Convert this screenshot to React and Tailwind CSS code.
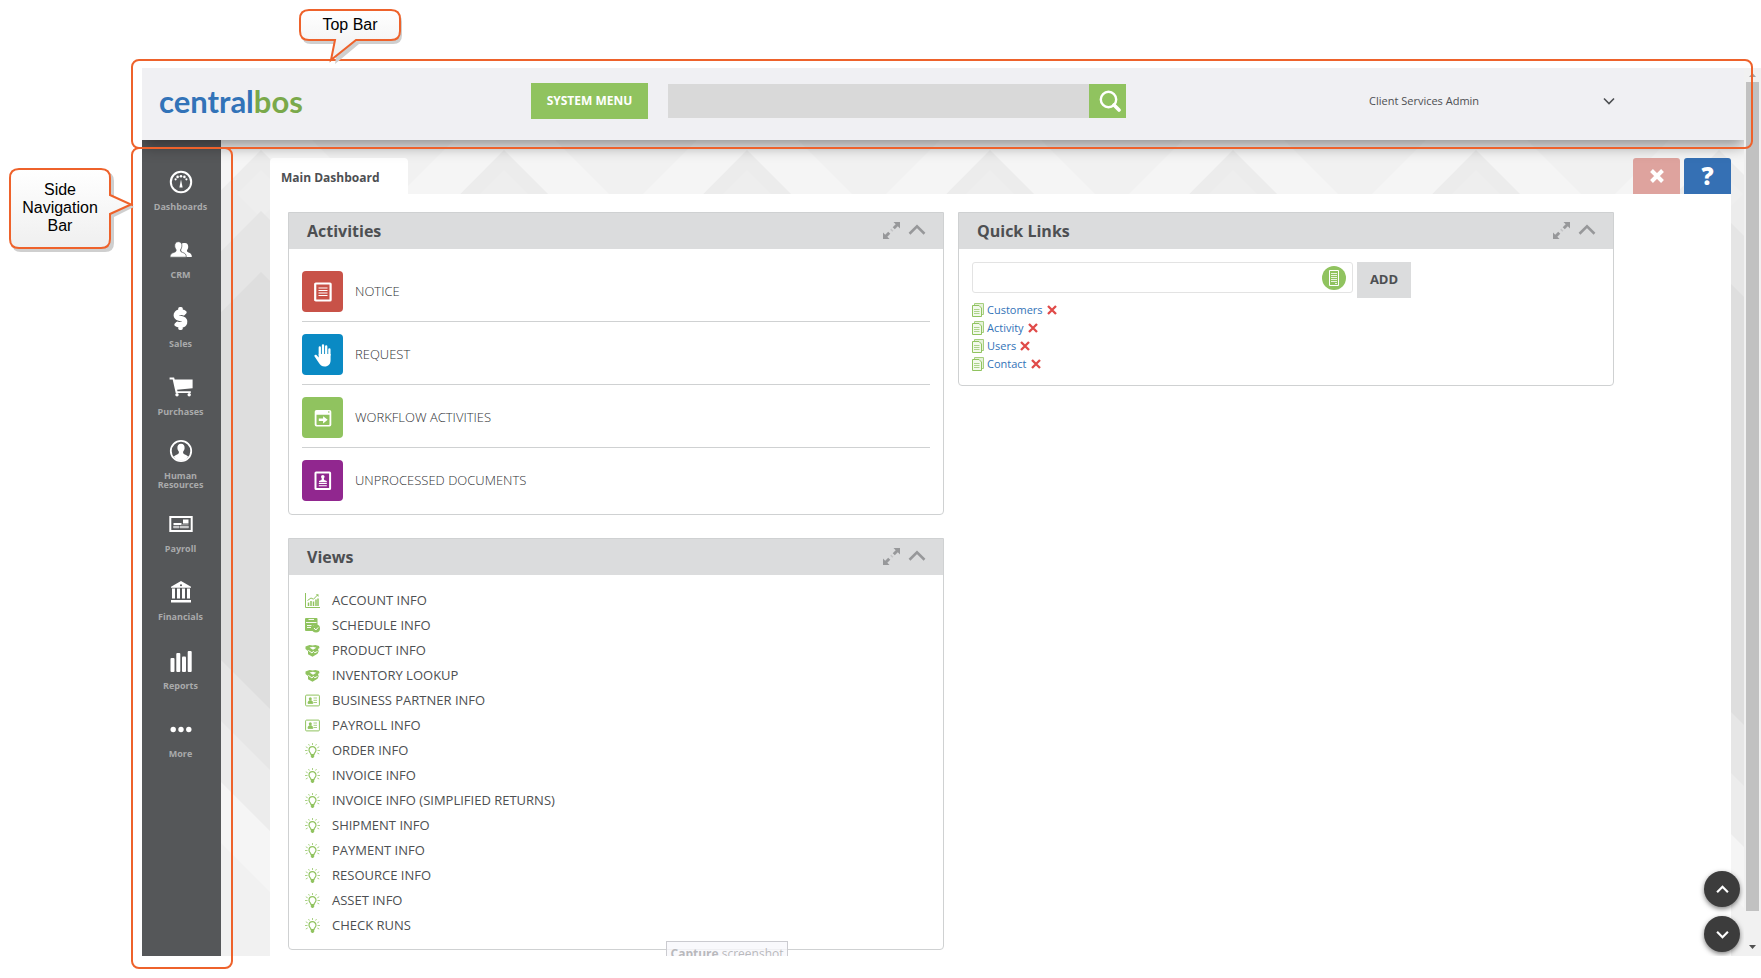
import { useState } from 'react'
import { FaHandPaper, FaDollarSign } from 'react-icons/fa'

const GREEN = '#90c35f'

const navItems = [
  { label: 'Dashboards', icon: GaugeIcon },
  { label: 'CRM', icon: PeopleIcon },
  { label: 'Sales', icon: DollarIcon },
  { label: 'Purchases', icon: CartIcon },
  { label: 'Human Resources', icon: PersonIcon },
  { label: 'Payroll', icon: CheckIcon },
  { label: 'Financials', icon: BankIcon },
  { label: 'Reports', icon: BarsIcon },
  { label: 'More', icon: DotsIcon },
]

const activities = [
  { label: 'NOTICE', icon: NoticeIcon, bg: 'bg-[#c85248]' },
  { label: 'REQUEST', icon: HandIcon, bg: 'bg-[#0a8ac4]' },
  { label: 'WORKFLOW ACTIVITIES', icon: WorkflowIcon, bg: 'bg-[#90c35f]' },
  { label: 'UNPROCESSED DOCUMENTS', icon: DocumentIcon, bg: 'bg-[#91278f]' },
]

const views = [
  { label: 'ACCOUNT INFO', icon: ChartIcon },
  { label: 'SCHEDULE INFO', icon: ScheduleIcon },
  { label: 'PRODUCT INFO', icon: BoxIcon },
  { label: 'INVENTORY LOOKUP', icon: BoxIcon },
  { label: 'BUSINESS PARTNER INFO', icon: IdCardIcon },
  { label: 'PAYROLL INFO', icon: IdCardIcon },
  { label: 'ORDER INFO', icon: BulbIcon },
  { label: 'INVOICE INFO', icon: BulbIcon },
  { label: 'INVOICE INFO (SIMPLIFIED RETURNS)', icon: BulbIcon },
  { label: 'SHIPMENT INFO', icon: BulbIcon },
  { label: 'PAYMENT INFO', icon: BulbIcon },
  { label: 'RESOURCE INFO', icon: BulbIcon },
  { label: 'ASSET INFO', icon: BulbIcon },
  { label: 'CHECK RUNS', icon: BulbIcon },
]

/* side navigation icons */

function GaugeIcon() {
  return (
    <svg width="24" height="24" viewBox="0 0 24 24" fill="none">
      <circle cx="12" cy="12" r="10.2" stroke="#fff" strokeWidth="2" />
      <path d="M12 9.5 13.6 17.5h-3.2z" fill="#fff" />
      <circle cx="12" cy="6.3" r="1.3" fill="#fff" />
      <circle cx="8.6" cy="6.9" r="1.3" fill="#fff" />
      <circle cx="15.4" cy="6.9" r="1.3" fill="#fff" />
      <circle cx="6.6" cy="9.3" r="1.1" fill="#fff" />
      <circle cx="17.4" cy="9.3" r="1.1" fill="#fff" />
    </svg>
  )
}

function PeopleIcon() {
  return (
    <svg width="24" height="24" viewBox="0 0 24 24">
      <path
        fill="#fff"
        d="M16 5c2.300 0 3.300 1.600 3.200 3.900 0 1.300-.6 2.300-1.100 3-.4 1.500 0 2.100 1.400 2.600 2.300.8 3.300 1.800 3.300 4.500h-6.600l-4-6V6c.8-.7 2-1 3.800-1z"
      />
      <path
        fill="#fff"
        stroke="#555759"
        strokeWidth=".7"
        d="M9.300 3.700c2.700 0 3.700 1.800 3.600 4.400 0 1.500-.7 2.600-1.300 3.400-.4 1.600.1 2.200 1.700 2.800 2.600.9 4 1.700 4 4.900H1c0-3.200 1.700-4 4.300-4.900 1.600-.6 2.100-1.200 1.700-2.800-.6-.8-1.300-1.900-1.300-3.400C5.600 5.500 6.700 3.700 9.300 3.700z"
      />
    </svg>
  )
}

function DollarIcon() {
  return <FaDollarSign className="text-[21px] text-white" stroke="#fff" strokeWidth="50" overflow="visible" />
}

function CartIcon() {
  return (
    <svg width="24" height="24" viewBox="0 0 24 24" fill="#fff">
      <path d="M.6 2.600h4.500l.6 1.900H23.600v8.700L8.100 14.700l.4 1.500h13.300v1.900H6.700L3.700 4.600H.6z" />
      <circle cx="8" cy="19.800" r="1.700" />
      <circle cx="20.200" cy="19.800" r="1.700" />
    </svg>
  )
}

function PersonIcon() {
  return (
    <svg width="24" height="24" viewBox="0 0 24 24">
      <circle cx="12" cy="12" r="10.200" fill="none" stroke="#fff" strokeWidth="1.800" />
      <path
        fill="#fff"
        d="M12 4.800c2.600 0 3.700 1.700 3.600 4.100 0 1.500-.7 2.700-1.400 3.600-.4 1.700.1 2.300 1.700 2.900 1.500.5 2.600 1.200 3.200 2.300-1.700 2.600-4.200 4-7.100 4s-5.400-1.400-7.100-4c.6-1.100 1.700-1.800 3.200-2.300 1.600-.6 2.100-1.200 1.700-2.900-.7-.9-1.400-2.100-1.400-3.600C8.300 6.500 9.400 4.800 12 4.800z"
      />
    </svg>
  )
}

function CheckIcon() {
  return (
    <svg width="24" height="24" viewBox="0 0 24 24">
      <rect x="1.300" y="5" width="21.400" height="14" fill="none" stroke="#fff" strokeWidth="2" />
      <path d="M14 7.500h5.500v4H14zM4.500 11h8v2h-8z" fill="#fff" />
      <path d="M4.500 14h5.500v2H4.500zM11 14h8.500v2H11zM13 12.500h6.500" fill="#c8c9ca" stroke="#c8c9ca" strokeWidth=".5" />
    </svg>
  )
}

function BankIcon() {
  return (
    <svg width="24" height="24" viewBox="0 0 24 24" fill="#fff">
      <path fillRule="evenodd" d="M12 1 22 6.800v1H2v-1zm0 3.200a1 1 0 1 0 0 2 1 1 0 0 0 0-2z" />
      <path d="M3 8.500h3v10H3zM8 8.500h3v10H8zM13 8.500h3v10h-3zM18 8.500h3v10h-3zM2 20h20v2.400H2z" />
    </svg>
  )
}

function BarsIcon() {
  return (
    <svg width="24" height="24" viewBox="0 0 24 24" fill="#fff">
      <rect x="1.500" y="9" width="4" height="14" rx="1" />
      <rect x="7.300" y="4" width="4" height="19" rx="1" />
      <rect x="13" y="7.500" width="4" height="15.500" rx="1" />
      <rect x="18.700" y="2" width="4" height="21" rx="1" />
    </svg>
  )
}

function DotsIcon() {
  return (
    <svg width="24" height="24" viewBox="0 0 24 24" fill="#fff">
      <circle cx="4.200" cy="12.500" r="2.700" />
      <circle cx="12" cy="12.500" r="2.700" />
      <circle cx="19.800" cy="12.500" r="2.700" />
    </svg>
  )
}

/* activity icons */

function NoticeIcon() {
  return (
    <svg width="20" height="22" viewBox="0 0 20 22" fill="none" stroke="#fff">
      <rect x="2.200" y="2.500" width="15.400" height="17" rx=".6" strokeWidth="2.200" />
      <path d="M5.500 7h9M5.500 9.500h9M5.500 12h9M5.500 14.500h9" strokeWidth="1.200" />
    </svg>
  )
}

function HandIcon() {
  return (
    <svg width="20" height="24" viewBox="0 0 20 24" fill="none" stroke="#fff" strokeLinecap="round">
      <path d="M6.800 12V4.500M10 11V2.500M13.200 11V3.500M16.400 12V6.500" strokeWidth="2.300" />
      <path
        d="M5.700 11h11.900v6c0 4.200-2.300 6.500-5.900 6.500-3 0-4.500-1.300-5.900-3.700L1.600 13.600c-.8-1.500.9-2.600 2.100-1.400l2 2.300z"
        fill="#fff"
        stroke="none"
      />
    </svg>
  )
}

function WorkflowIcon() {
  return (
    <svg width="20" height="20" viewBox="0 0 20 20">
      <path fill="#fff" fillRule="evenodd" d="M3.500 2h13A1.800 1.800 0 0 1 18.300 3.800v13a1.800 1.800 0 0 1-1.800 1.800h-13a1.800 1.800 0 0 1-1.800-1.800v-13A1.800 1.800 0 0 1 3.500 2zm0 4.800v9.400q0 .7.700.7h11.600q.7 0 .7-.7V6.800z" />
      <path fill="#fff" d="M5.800 10.600h4.300V8.200l4.600 3.600-4.600 3.600V13H5.800z" />
      <circle cx="15.800" cy="4" r=".8" fill={GREEN} />
    </svg>
  )
}

function DocumentIcon() {
  return (
    <svg width="20" height="22" viewBox="0 0 20 22" fill="none">
      <rect x="2.500" y="2.500" width="14.600" height="16.500" rx=".6" stroke="#fff" strokeWidth="2" />
      <circle cx="9.800" cy="6.800" r="1.800" fill="#fff" />
      <path d="M8.800 8h2l.4 2 2.600 1v1.200H6V11l2.500-1z" fill="#fff" />
      <path d="M5.800 13.500h8M5.800 15.800h8" stroke="#fff" strokeWidth="1.100" />
    </svg>
  )
}

/* view list icons */

function ChartIcon() {
  return (
    <svg width="15" height="15" viewBox="0 0 15 15" fill="none" stroke={GREEN}>
      <path d="M.5 0v14.500H15" />
      <path d="M3.500 13V9.500M6 13V8M8.500 13V8.500M11 13V6.500M13 13V5.500" strokeWidth="1.500" />
      <path d="M2.500 7.500 6 5l2.500 1.200L12.500 2" />
      <path d="M10.800 1.200h2.700v2.700z" fill={GREEN} stroke="none" />
    </svg>
  )
}

function ScheduleIcon() {
  return (
    <svg width="15" height="15" viewBox="0 0 15 15">
      <path d="M0 1q0-1 1-1h10.500q1 0 1 1v6H8v6H1q-1 0-1-1z" fill={GREEN} />
      <path d="M3.500 1.500h5.500M1 4.500h10.500M2 7.500h4.500M2 9.500h4" stroke="#fff" strokeWidth=".9" />
      <circle cx="11" cy="10.500" r="4" fill={GREEN} />
      <path d="M9 10l1.800 2 2.400-2.600" fill="none" stroke="#fff" />
    </svg>
  )
}

function BoxIcon() {
  return (
    <svg width="15" height="13" viewBox="0 0 15 13">
      <path d="M.5 2.500 4.500 1l3 .6 3-.6 3.500 1 .5 2-1.500 1 .7 2.300-1.200 2.500-5 3-4.500-2.600V7L.5 5z" fill={GREEN} />
      <path d="M4.500 3.400 8 2.800l3.300 1L8 5.800z" fill="#fff" />
      <path d="M3.300 6.300 7 9l1.300-1.700 1.500 1.400 2.700-1.200" fill="none" stroke="#fff" strokeWidth="1" />
    </svg>
  )
}

function IdCardIcon() {
  return (
    <svg width="15" height="13" viewBox="0 0 15 13">
      <rect x=".6" y="1.100" width="13.800" height="10.800" rx="1" fill="none" stroke={GREEN} />
      <circle cx="5.300" cy="4.700" r="1.500" fill={GREEN} />
      <path d="M3 9.500c0-2.200.8-3 2.300-3s2.500.8 2.500 3zM8.500 4h3.500M8.500 6.300h3.500M8.500 8.500h3.500" fill={GREEN} stroke={GREEN} strokeWidth=".8" />
    </svg>
  )
}

function BulbIcon() {
  return (
    <svg width="15" height="15" viewBox="0 0 15 15" fill="none" stroke={GREEN}>
      <path d="M6 11.500c0-1.800-2-2.200-2-4.300a3.500 3.500 0 0 1 7 0c0 2.100-2 2.500-2 4.300z" strokeWidth="1.200" />
      <path d="M5.800 11.500h3.400v2L8.200 15H6.800l-1-1.500z" fill={GREEN} stroke="none" />
      <path d="M7.500 0v2M0 7.500h2.500M12.500 7.500H15M3.500 1l.9 1.600M11.500 1l-.9 1.600M.8 3.800l1.900 1M14.200 3.800l-1.900 1M.8 11l1.900-1M14.200 11l-1.900-1" opacity=".75" />
    </svg>
  )
}

/* small shared icons */

function Chevron({ up, size = 12, width = 2, color = 'currentColor' }) {
  return (
    <svg width={size} height={size} viewBox="0 0 12 12" fill="none" stroke={color} strokeWidth={width}>
      <path d={up ? 'M1 8.500l5-5 5 5' : 'M1 3.500l5 5 5-5'} />
    </svg>
  )
}

function ExpandIcon() {
  return (
    <svg width="17" height="17" viewBox="0 0 17 17" fill="#97989a">
      <path d="M10.500 0H17v6.500l-2.200-2.200-3 3-2.100-2.100 3-3zM0 17v-6.500l2.200 2.200 3-3 2.100 2.100-3 3L6.500 17z" />
      <path d="M8.300 6.600l2.100 2.100-1.100 1.100-2.100-2.100z" opacity=".35" />
    </svg>
  )
}

function PagesIcon() {
  return (
    <svg width="12" height="14" viewBox="0 0 12 14" fill="none" stroke={GREEN}>
      <path d="M2.500 2.500V.5h9v11h-1.500" fill="#dff0cf" opacity=".8" />
      <path d="M.5 2.500h6.500l2.500 2.500v8.500h-9z" fill="#f2f9ec" />
      <path d="M2 6.500h5.500M2 8.500h5.500M2 10.500h5.500" opacity=".7" />
    </svg>
  )
}

function DeleteIcon() {
  return (
    <svg width="10" height="10" viewBox="0 0 10 10" stroke="#e04a48" strokeWidth="2.300">
      <path d="M1 1l8 8M9 1L1 9" />
    </svg>
  )
}

function Backdrop() {
  return (
    <svg className="absolute inset-0 h-full w-full" aria-hidden="true">
      <defs>
        <pattern id="facets" x="-81" y="0" width="243" height="1400" patternUnits="userSpaceOnUse">
          <rect width="243" height="1400" fill="#f5f5f5" />
          <path d="M0 0h71L0 71zM243 0h-71l71 71z" fill="#f1f1f1" />
          <path d="M121 10l122 122v1268H0V132z" fill="#ececec" />
          <path d="M121 30l24 24-24 24-24-24z" fill="#eeeeee" />
          <path d="M121 71l122 122v1207H0V193z" fill="#e5e5e5" />
          <path d="M121 132l122 122v1146H0V254z" fill="#dedede" />
          <path d="M0 439l243 243v718H0z" fill="#e6e6e6" />
          <path d="M0 500l243 243v657H0z" fill="#ececec" />
          <path d="M0 561l243 243v596H0z" fill="#f5f5f5" />
          <path d="M0 622l243 243v535H0z" fill="#f1f1f1" />
        </pattern>
      </defs>
      <rect width="100%" height="100%" fill="url(#facets)" />
    </svg>
  )
}

function Card({ title, children }) {
  const [open, setOpen] = useState(true)

  return (
    <section className="rounded-b-[4px] border border-[#cfd1d2] bg-white">
      <header className="flex h-9 items-center bg-[#dbdcdd] pr-[17px] pl-[18px]">
        <h2 className="flex-1 text-base font-bold">{title}</h2>
        <div className="flex items-center gap-2 pb-[2px]">
          <button type="button" aria-label={'Expand ' + title}>
            <ExpandIcon />
          </button>
          <button type="button" aria-label={'Collapse ' + title} onClick={() => setOpen(!open)}>
            <Chevron up={open} size={18} width={1.7} color="#97989a" />
          </button>
        </div>
      </header>
      {open && children}
    </section>
  )
}

function TopBar() {
  return (
    <header className="relative z-10 flex h-[72px] shrink-0 items-center bg-[#f0f0f3] pb-[6px] pl-[17px] shadow-[0_6px_14px_rgba(0,0,0,0.4)]">
      <a href="#home" className="w-[372px] font-[Lato,sans-serif] text-[31px] leading-9 font-bold text-[#3273b8]">
        central<span className="text-[#7aa94a]">bos</span>
      </a>
      <button type="button" className="h-9 w-[117px] bg-[#90c35f] text-xs font-bold text-white">
        SYSTEM MENU
      </button>
      <form className="ml-5 flex h-[34px] w-[458px]" onSubmit={(e) => e.preventDefault()}>
        <input type="text" aria-label="Search" className="min-w-0 flex-1 bg-[#d9d9d9] px-3 text-sm outline-none" />
        <button type="submit" aria-label="Search" className="flex w-[37px] items-center justify-center bg-[#90c35f] pl-1">
          <svg width="22" height="22" viewBox="0 0 22 22" fill="none" stroke="#fff">
            <circle cx="9.500" cy="9.500" r="7.700" strokeWidth="2.400" />
            <path d="M15 15l5 5" strokeWidth="3.600" strokeLinecap="round" />
          </svg>
        </button>
      </form>
      <button type="button" className="mr-[129px] ml-auto flex w-[246px] items-center justify-between text-[11px]">
        Client Services Admin
        <Chevron size={12} width={1.6} />
      </button>
    </header>
  )
}

function SideNav() {
  return (
    <nav className="w-[79px] shrink-0 bg-[#555759] pt-4">
      <ul className="grid h-[616px] auto-rows-fr">
        {navItems.map(({ label, icon: Icon }) => (
          <li key={label} className="flex">
            <a href="#nav" className="flex flex-1 flex-col items-center justify-center pr-[13px] pl-[11px] text-center text-[9px] leading-[9px] font-bold text-[#a9aaab]">
              <span className="mb-2 flex h-6 items-center">
                <Icon />
              </span>
              {label}
            </a>
          </li>
        ))}
      </ul>
    </nav>
  )
}

function Activities() {
  return (
    <Card title="Activities">
      <ul className="px-[13px] pt-[10px] pb-1">
        {activities.map(({ label, icon: Icon, bg }) => (
          <li key={label} className="border-b border-[#cfd1d2] pt-3 pb-[9px] last:border-b-0">
            <a href="#activity" className="flex items-center gap-3 text-[13px] font-light text-[#303235]">
              <span className={'flex size-[41px] items-center justify-center rounded-[4px] ' + bg}>
                <Icon />
              </span>
              {label}
            </a>
          </li>
        ))}
      </ul>
    </Card>
  )
}

function Views() {
  return (
    <Card title="Views">
      <ul className="px-4 pt-[13px] pb-[11px]">
        {views.map(({ label, icon: Icon }) => (
          <li key={label}>
            <a href="#view" className="flex h-[25px] items-center gap-3 text-[13px]">
              <Icon />
              {label}
            </a>
          </li>
        ))}
      </ul>
    </Card>
  )
}

function QuickLinks() {
  const [links, setLinks] = useState(['Customers', 'Activity', 'Users', 'Contact'])
  const [value, setValue] = useState('')

  const add = (e) => {
    e.preventDefault()
    if (!value.trim()) return
    setLinks([...links, value.trim()])
    setValue('')
  }

  return (
    <Card title="Quick Links">
      <div className="px-[13px] pt-[13px] pb-3">
        <form className="flex items-start gap-1" onSubmit={add}>
          <div className="flex h-[31px] w-[381px] items-center rounded-[3px] border border-[#e3e3e3] pr-[6px]">
            <input
              type="text"
              aria-label="Quick link"
              value={value}
              onChange={(e) => setValue(e.target.value)}
              className="min-w-0 flex-1 px-2 text-xs outline-none"
            />
            <button type="button" aria-label="Browse links" className="flex size-6 items-center justify-center rounded-full bg-[#90c35f]">
              <svg width="12" height="16" viewBox="0 0 12 16" fill="none" stroke="#fff">
                <path d="M1.500 .5h9v15h-9z" />
                <path d="M3 3.500h6M3 5.500h6M3 7.500h6M3 9.500h6M3 11.500h6M7 13.500h2" opacity=".8" />
              </svg>
            </button>
          </div>
          <button type="submit" className="h-9 w-[54px] bg-[#dbdcdd] text-[13px] font-bold">
            ADD
          </button>
        </form>
        <ul className="mt-[3px]">
          {links.map((link) => (
            <li key={link} className="flex h-[18px] items-center text-[11px] text-[#3273b8]">
              <PagesIcon />
              <a href="#link" className="mr-1 ml-[3px]">{link}</a>
              <button type="button" aria-label={'Remove ' + link} onClick={() => setLinks(links.filter((l) => l !== link))}>
                <DeleteIcon />
              </button>
            </li>
          ))}
        </ul>
      </div>
    </Card>
  )
}

function ScrollTrack() {
  return (
    <div className="flex w-[17px] shrink-0 flex-col items-center bg-[#f1f1f1] pt-[5px]" aria-hidden="true">
      <svg width="7" height="4" viewBox="0 0 7 4" fill="#a3a3a3">
        <path d="M3.500 0 7 4H0z" />
      </svg>
      <div className="mt-[5px] mb-[34px] w-[13px] flex-1 bg-[#c1c1c1]" />
      <svg width="7" height="4" viewBox="0 0 7 4" fill="#505050" className="mb-[7px]">
        <path d="M0 0h7L3.500 4z" />
      </svg>
    </div>
  )
}

function Callouts() {
  return (
    <div className="pointer-events-none absolute inset-0 z-30 font-['Liberation_Sans',sans-serif] text-base text-black">
      <div className="absolute top-[59px] right-2 left-[131px] h-[90px] rounded-[8px] border-2 border-[#ee622b]" />
      <div className="absolute top-[147px] bottom-[9px] left-[131px] w-[102px] rounded-[8px] border-2 border-[#ee622b]" />

      <div className="absolute top-2 left-[298px] h-[60px] w-[110px]">
        <svg width="110" height="60" viewBox="0 0 110 60" className="absolute inset-0">
          <defs>
            <linearGradient id="bubble" x1="0" y1="0" x2="0" y2="1">
              <stop offset="0" stopColor="#fff" />
              <stop offset="1" stopColor="#efefef" />
            </linearGradient>
          </defs>
          <path d="M13 5h82q9 0 9 9v13q0 9-9 9H61L37 56l3-20H13q-9 0-9-9V14q0-9 9-9z" fill="#cfcfcf" />
          <path d="M11 2h82q9 0 9 9v12q0 9-9 9H58L33 52l4-20H11q-9 0-9-9V11q0-9 9-9z" fill="url(#bubble)" stroke="#ee622b" strokeWidth="2" />
        </svg>
        <p className="relative w-[104px] pt-[5px] text-center">Top Bar</p>
      </div>

      <div className="absolute top-[167px] left-2 h-[90px] w-[130px]">
        <svg width="130" height="90" viewBox="0 0 130 90" className="absolute inset-0">
          <path d="M13 5h84q9 0 9 9v15l20 11-20 10v26q0 9-9 9H13q-9 0-9-9V14q0-9 9-9z" fill="#cfcfcf" />
          <path d="M11 2h82q9 0 9 9v17l21 9.500L102 47v25q0 9-9 9H11q-9 0-9-9V11q0-9 9-9z" fill="url(#bubble)" stroke="#ee622b" strokeWidth="2" />
        </svg>
        <p className="relative w-[104px] pt-[14px] text-center leading-[18px]">
          Side
          <br />
          Navigation
          <br />
          Bar
        </p>
      </div>
    </div>
  )
}

export default function App() {
  return (
    <div className="relative flex h-screen bg-white pt-[68px] pb-[22px] pl-[142px] font-['Open_Sans','Noto_Sans',sans-serif] text-[#4d4f52]">
      <div className="relative flex min-w-0 flex-1 flex-col overflow-hidden">
        <TopBar />
        <div className="flex min-h-0 flex-1">
          <SideNav />
          <main className="relative min-w-0 flex-1">
            <Backdrop />
            <div className="relative flex h-full flex-col pt-[18px] pr-[13px] pl-[49px]">
              <div className="flex h-9 shrink-0 justify-between">
                <button type="button" className="w-[138px] rounded-t-[4px] bg-white pt-1 pl-[11px] text-left text-xs font-bold">
                  Main Dashboard
                </button>
                <div className="flex gap-1 text-white">
                  <button type="button" aria-label="Close" className="flex w-[47px] items-center justify-center rounded-t-[3px] bg-[#dea39e]">
                    <svg width="14" height="14" viewBox="0 0 14 14" stroke="#fff" strokeWidth="4">
                      <path d="M1.500 1.500l11 11M12.500 1.500l-11 11" />
                    </svg>
                  </button>
                  <button type="button" className="w-[47px] rounded-t-[3px] bg-[#3570b4] text-2xl leading-9 font-extrabold">
                    ?
                  </button>
                </div>
              </div>
              <div className="grid min-h-0 flex-1 grid-cols-2 items-start gap-[14px] bg-white pt-[18px] pr-[117px] pl-[18px]">
                <div className="flex flex-col gap-[23px]">
                  <Activities />
                  <Views />
                </div>
                <QuickLinks />
              </div>
            </div>
          </main>
        </div>

        <div className="absolute right-1 bottom-1 z-20 flex flex-col gap-[9px] text-white">
          <button type="button" aria-label="Scroll up" className="flex size-9 items-center justify-center rounded-full bg-[#3c3c3c] shadow-[0_2px_5px_rgba(0,0,0,0.5)]">
            <Chevron up size={13} />
          </button>
          <button type="button" aria-label="Scroll down" className="flex size-9 items-center justify-center rounded-full bg-[#3c3c3c] shadow-[0_2px_5px_rgba(0,0,0,0.5)]">
            <Chevron size={13} />
          </button>
        </div>

        {/* tooltip cut off by the bottom of the window */}
        <div className="absolute -bottom-[9px] left-[524px] z-20 h-6 w-[122px] border border-[#cbcbd0] bg-[#f8f8fb]/80 text-center text-xs leading-6 text-[#b9b9bd]">
          <b>Capture</b> screenshot
        </div>
      </div>
      <ScrollTrack />
      <Callouts />
    </div>
  )
}
